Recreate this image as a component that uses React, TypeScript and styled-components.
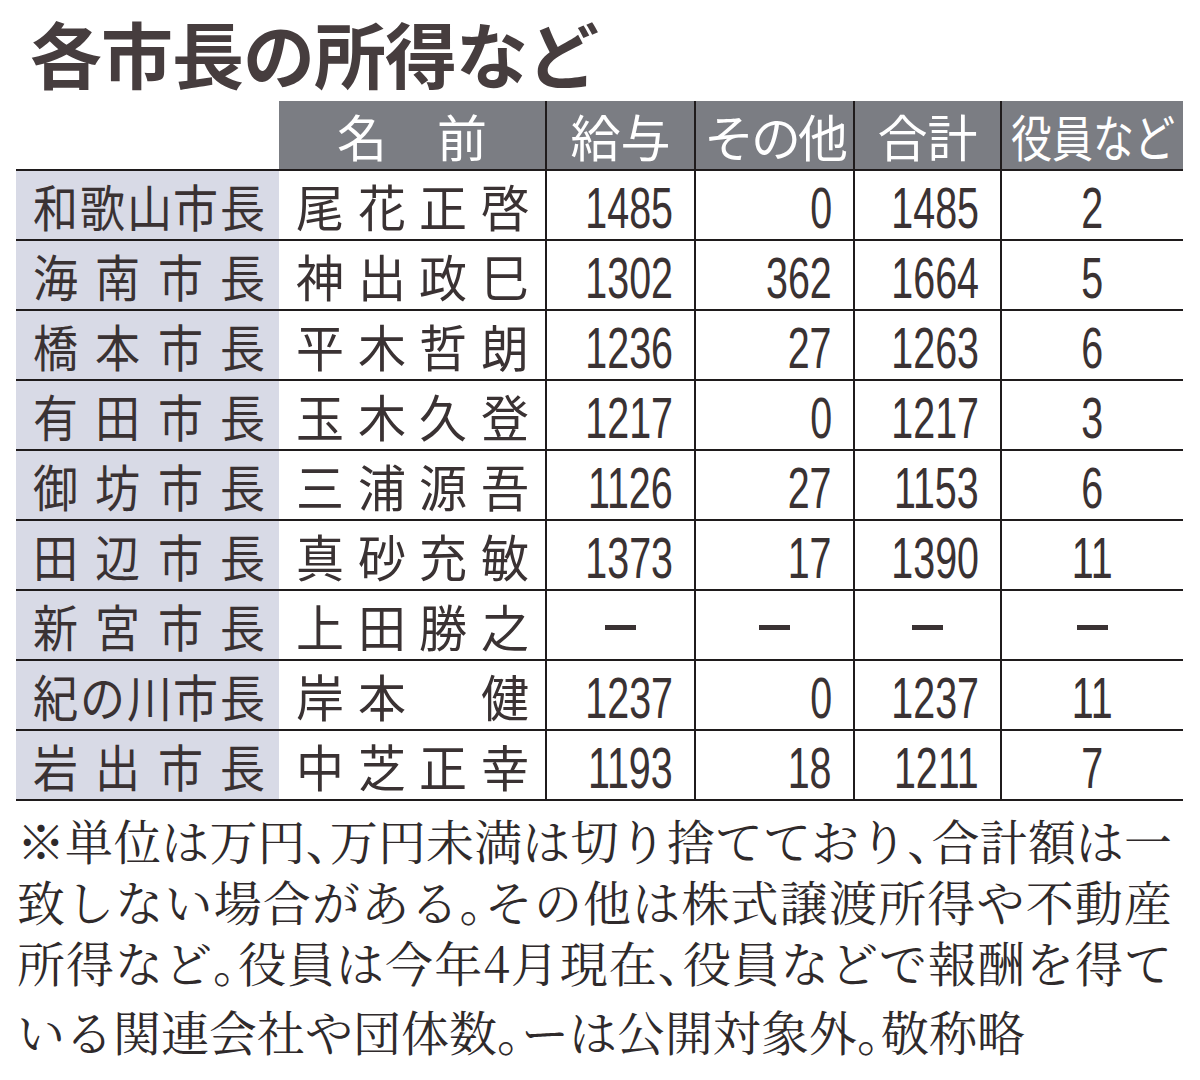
import React from "react";
import styled, { createGlobalStyle } from "styled-components";

const GlobalStyle = createGlobalStyle`
  html, body {
    margin: 0;
    padding: 0;
    background: #ffffff;
  }
  body {
    font-family: "Noto Sans CJK JP", "Noto Sans", sans-serif;
    color: #3a3233;
  }
`;

const LINE = "#1f1b1c";
const HEAD_BG = "#7b7d83";
const LAVENDER = "#d8dae6";
const INK = "#3a3233";

const Page = styled.div`
  width: 1200px;
  min-height: 1080px;
  box-sizing: border-box;
  padding-top: 10px;
  background: #fff;
`;

const Title = styled.h1`
  margin: 0 0 7px 30px;
  font-family: "Noto Sans CJK JP", sans-serif;
  font-size: 72px;
  line-height: 84px;
  font-weight: 700;
  color: #463d3e;
  letter-spacing: -1px;
  white-space: nowrap;
`;

const Table = styled.div`
  margin-left: 16px;
  width: 1167px;
  display: grid;
  grid-template-columns: 263px 266px 149px 159px 147px 183px;
  grid-auto-rows: 70px;
`;

const HeadCell = styled.div<{ $blank?: boolean; $divider?: boolean }>`
  box-sizing: border-box;
  display: flex;
  align-items: center;
  justify-content: center;
  background: ${(p) => (p.$blank ? "#ffffff" : HEAD_BG)};
  border-bottom: 2px solid ${LINE};
  border-left: ${(p) => (p.$divider ? `2px solid ${LINE}` : "none")};
  color: #ffffff;
  font-size: 50px;
  font-weight: 400;
  line-height: 1;
  white-space: nowrap;
`;

const HeadLabel = styled.span<{ $squeeze?: number; $spacing?: number }>`
  display: inline-block;
  letter-spacing: ${(p) => p.$spacing ?? 0}px;
  padding-left: ${(p) => p.$spacing ?? 0}px;
  transform: scaleX(${(p) => p.$squeeze ?? 1});
  transform-origin: center center;
`;

const SpreadCell = styled.div<{ $shade?: boolean; $padL: number; $padR: number }>`
  box-sizing: border-box;
  display: flex;
  align-items: center;
  justify-content: space-between;
  padding: 0 ${(p) => p.$padR}px 0 ${(p) => p.$padL}px;
  background: ${(p) => (p.$shade ? LAVENDER : "#ffffff")};
  border-bottom: 2px solid ${LINE};
  color: ${INK};
  font-size: 50px;
  line-height: 1;
`;

const Char = styled.span<{ $scale: number }>`
  display: inline-block;
  width: ${(p) => p.$scale}em;
  white-space: nowrap;
  transform: scaleX(${(p) => p.$scale});
  transform-origin: left center;
`;

const NumCell = styled.div<{ $center?: boolean }>`
  box-sizing: border-box;
  display: flex;
  align-items: center;
  justify-content: ${(p) => (p.$center ? "center" : "flex-end")};
  padding-right: ${(p) => (p.$center ? "0" : "21px")};
  border-left: 2px solid ${LINE};
  border-bottom: 2px solid ${LINE};
  color: ${INK};
`;

const Num = styled.span<{ $center?: boolean }>`
  display: inline-block;
  margin-top: 6px;
  font-family: "Liberation Sans", Arial, sans-serif;
  font-size: 58px;
  line-height: 1;
  font-weight: 400;
  transform: scaleX(0.68);
  transform-origin: ${(p) => (p.$center ? "center" : "right")} center;
`;

const Dash = styled.span`
  display: block;
  width: 31px;
  height: 5px;
  background: ${INK};
  margin-top: 4px;
`;

const Notes = styled.div`
  margin-top: 8px;
  margin-left: 17px;
  width: 1155px;
  font-family: "Noto Serif CJK JP", "Noto Sans CJK JP", serif;
  font-size: 48px;
  font-weight: 400;
  color: #2f2a2b;
`;

const NoteLine = styled.div<{ $gap?: number; $justify?: boolean }>`
  line-height: 61px;
  white-space: nowrap;
  margin-top: ${(p) => p.$gap ?? 0}px;
  text-align: ${(p) => (p.$justify ? "justify" : "left")};
  text-align-last: ${(p) => (p.$justify ? "justify" : "left")};
  text-justify: inter-character;
`;

const Punct = styled.span`
  font-feature-settings: "halt" 1;
`;

type Row = {
  city: string;
  name: string;
  pay: string | null;
  other: string | null;
  total: string | null;
  posts: string | null;
};

const rows: Row[] = [
  { city: "和歌山市長", name: "尾花正啓", pay: "1485", other: "0", total: "1485", posts: "2" },
  { city: "海南市長", name: "神出政巳", pay: "1302", other: "362", total: "1664", posts: "5" },
  { city: "橋本市長", name: "平木哲朗", pay: "1236", other: "27", total: "1263", posts: "6" },
  { city: "有田市長", name: "玉木久登", pay: "1217", other: "0", total: "1217", posts: "3" },
  { city: "御坊市長", name: "三浦源吾", pay: "1126", other: "27", total: "1153", posts: "6" },
  { city: "田辺市長", name: "真砂充敏", pay: "1373", other: "17", total: "1390", posts: "11" },
  { city: "新宮市長", name: "上田勝之", pay: null, other: null, total: null, posts: null },
  { city: "紀の川市長", name: "岸本　健", pay: "1237", other: "0", total: "1237", posts: "11" },
  { city: "岩出市長", name: "中芝正幸", pay: "1193", other: "18", total: "1211", posts: "7" },
];

const Spread: React.FC<{ text: string; scale: number }> = ({ text, scale }) => (
  <>
    {Array.from(text).map((c, i) => (
      <Char key={i} $scale={scale}>
        {c}
      </Char>
    ))}
  </>
);

const Value: React.FC<{ v: string | null; center?: boolean }> = ({ v, center }) => (
  <NumCell $center={center || v === null}>
    {v === null ? <Dash /> : <Num $center={center}>{v}</Num>}
  </NumCell>
);

const P: React.FC<{ c: string }> = ({ c }) => <Punct>{c}</Punct>;

export default function App() {
  return (
    <Page>
      <GlobalStyle />
      <Title>各市長の所得など</Title>
      <Table>
        <HeadCell $blank />
        <HeadCell>
          <HeadLabel>名　前</HeadLabel>
        </HeadCell>
        <HeadCell $divider>
          <HeadLabel>給与</HeadLabel>
        </HeadCell>
        <HeadCell $divider>
          <HeadLabel $spacing={-3}>その他</HeadLabel>
        </HeadCell>
        <HeadCell $divider>
          <HeadLabel>合計</HeadLabel>
        </HeadCell>
        <HeadCell $divider>
          <HeadLabel $squeeze={0.82}>役員など</HeadLabel>
        </HeadCell>
        {rows.map((r) => (
          <React.Fragment key={r.city}>
            <SpreadCell $shade $padL={17} $padR={14}>
              <Spread text={r.city} scale={0.9} />
            </SpreadCell>
            <SpreadCell $padL={17} $padR={16}>
              <Spread text={r.name} scale={0.96} />
            </SpreadCell>
            <Value v={r.pay} />
            <Value v={r.other} />
            <Value v={r.total} />
            <Value v={r.posts} center />
          </React.Fragment>
        ))}
      </Table>
      <Notes>
        <NoteLine $justify>
          ※単位は万円<P c="、" />万円未満は切り捨てており<P c="、" />合計額は一
        </NoteLine>
        <NoteLine $justify>
          致しない場合がある<P c="。" />その他は株式譲渡所得や不動産
        </NoteLine>
        <NoteLine $justify>
          所得など<P c="。" />役員は今年4月現在<P c="、" />役員などで報酬を得て
        </NoteLine>
        <NoteLine $gap={8}>
          いる関連会社や団体数<P c="。" />ーは公開対象外<P c="。" />敬称略
        </NoteLine>
      </Notes>
    </Page>
  );
}
